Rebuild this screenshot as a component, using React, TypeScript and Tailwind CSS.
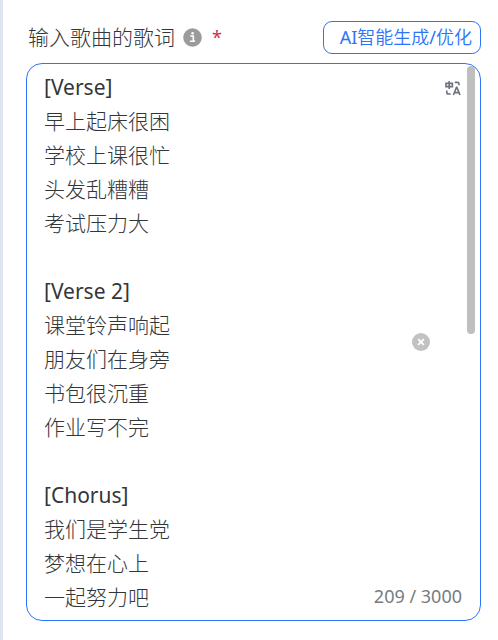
import { useState } from 'react';

const initialLyrics = `[Verse]
早上起床很困
学校上课很忙
头发乱糟糟
考试压力大

[Verse 2]
课堂铃声响起
朋友们在身旁
书包很沉重
作业写不完

[Chorus]
我们是学生党
梦想在心上
一起努力吧
未来更好的`;

const hiddenLength = 209 - initialLyrics.length;

export default function App() {
  const [lyrics, setLyrics] = useState(initialLyrics);

  return (
    <main className="min-h-screen border-l-3 border-[#dce5f1] bg-white pt-5 pr-[17px] pb-5 pl-[23px] font-['Noto_Sans','Noto_Sans_CJK_SC_Light','Noto_Sans_CJK_SC',sans-serif] text-[#333639]">
      <div className="flex h-[34px] items-center justify-between pl-0.5">
        <div className="flex items-center">
          <label htmlFor="lyrics" className="text-[21px] leading-[34px]">
            输入歌曲的歌词
          </label>
          <svg className="ml-2 size-[19px]" viewBox="0 0 19 19" aria-hidden="true">
            <circle cx="9.5" cy="9.5" r="9.3" fill="#9b9b9b" />
            <path d="M7.2 8h3.1v5M6.9 13.3h5.2" fill="none" stroke="#fff" strokeWidth="1.6" />
            <circle cx="9.6" cy="5.2" r="1.3" fill="#fff" />
          </svg>
          <span className="ml-2.5 text-[18px] leading-[34px] text-[#d03050]">*</span>
        </div>
        <button
          type="button"
          className="h-[33px] rounded-[9px] border border-[#2d74fa] pr-2 pl-4 font-['Noto_Sans','Noto_Sans_CJK_SC_DemiLight','Noto_Sans_CJK_SC',sans-serif] text-[18px] text-[#2d74fa]"
        >
          AI智能生成/优化
        </button>
      </div>

      <div className="mt-[9px] flex overflow-hidden rounded-2xl border border-[#2d74fa]">
        <textarea
          id="lyrics"
          rows={16}
          maxLength={3000}
          spellCheck={false}
          value={lyrics}
          onChange={(e) => setLyrics(e.target.value)}
          className="min-w-0 flex-1 resize-none py-1.5 pl-[17px] text-[21px] leading-[34px] outline-none [scrollbar-width:none]"
        />

        <div className="flex flex-col items-end justify-between py-3.5">
          <button type="button" aria-label="翻译" className="mr-px flex h-5 items-center text-[#6b7280]">
            <svg className="size-4" viewBox="0 0 16 16" fill="none" stroke="currentColor" strokeWidth="1.6">
              <path d="M1 3.4h6.4v3.2H1zM4.2 1v8" />
              <path d="M9.8 2.4h2.6a1.6 1.6 0 0 1 1.6 1.6v1.2M1.8 10.6v1.6a1.8 1.8 0 0 0 1.8 1.8h2" />
              <path d="M8.4 15l3.1-7.6h.4L15 15M9.4 12.6H14" />
            </svg>
          </button>
          <button type="button" aria-label="清空" className="mr-8" onClick={() => setLyrics('')}>
            <svg className="size-[18px]" viewBox="0 0 18 18">
              <circle cx="9" cy="9" r="9" fill="#c2c2c2" />
              <path d="M6.2 6.2l5.6 5.6M11.8 6.2l-5.6 5.6" stroke="#fff" strokeWidth="1.8" />
            </svg>
          </button>
          <span className="text-[18px] leading-5 text-[#767c82]">
            {lyrics.length + hiddenLength} / 3000
          </span>
        </div>

        {/* scrollbar thumb */}
        <div className="mx-[5px] mt-0.5 h-[268px] w-2 rounded-full bg-[#bfbfbf]" />
      </div>
    </main>
  );
}
